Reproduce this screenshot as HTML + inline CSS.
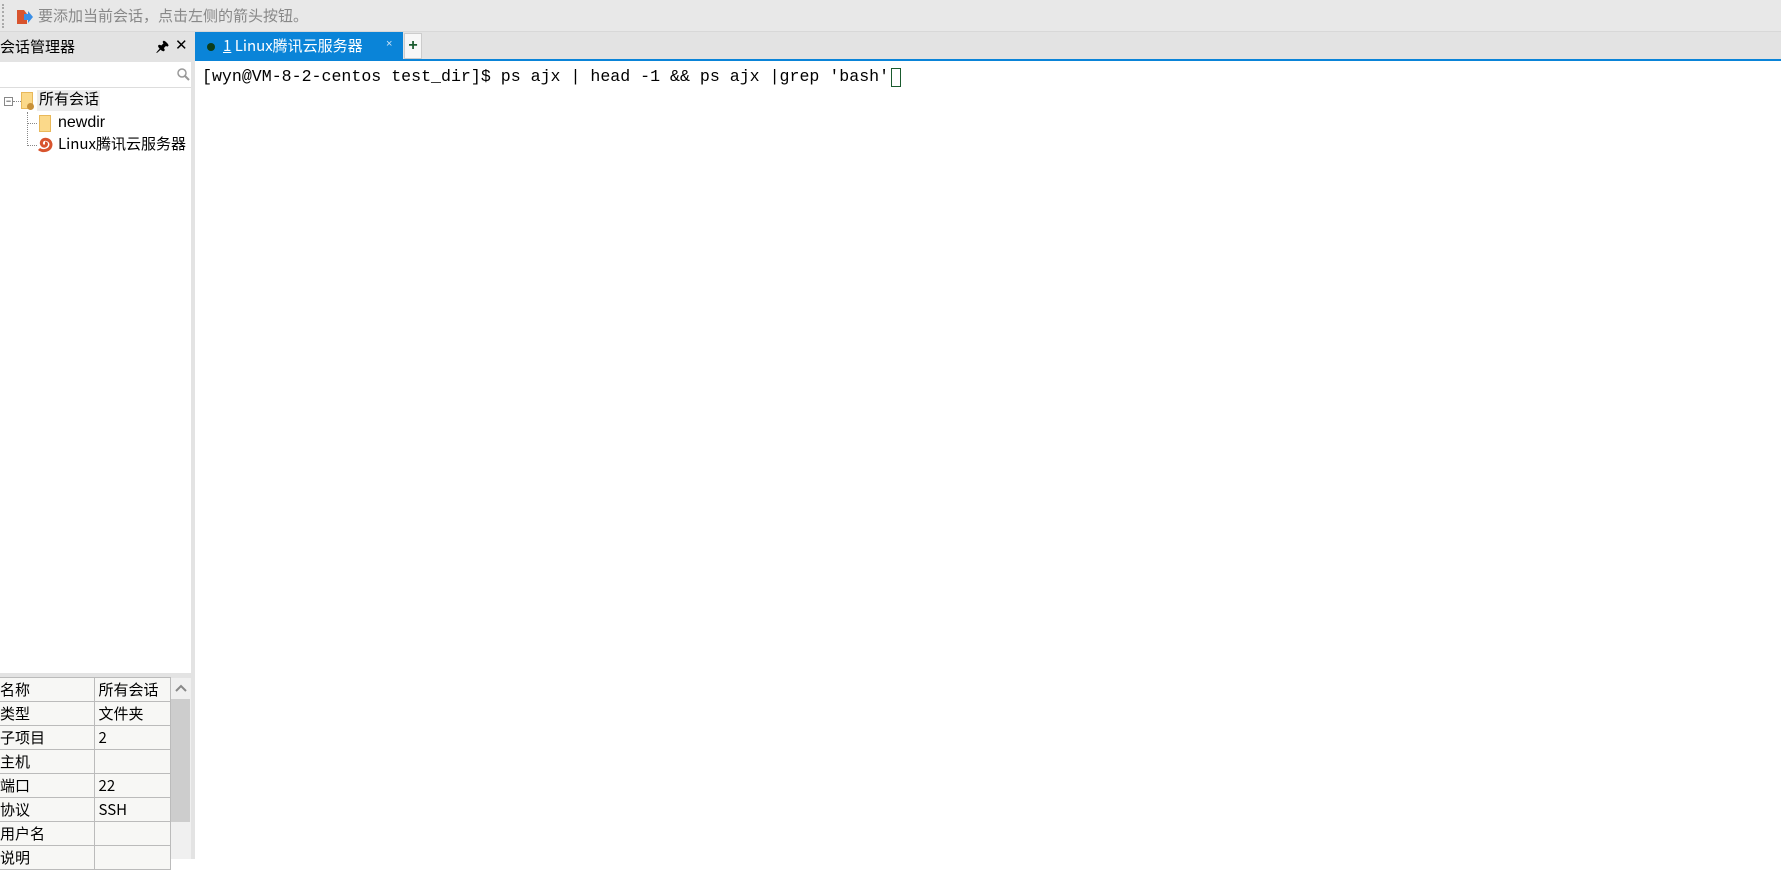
<!DOCTYPE html>
<html><head><meta charset="utf-8"><style>
*{margin:0;padding:0;box-sizing:border-box}
body{width:1781px;height:859px;overflow:hidden;background:#fff;font-family:"Liberation Sans","Noto Sans CJK SC",sans-serif;font-size:14px;color:#000;position:relative}
.a{position:absolute;line-height:1.2}
.cj{font-family:"Noto Sans CJK SC","Liberation Sans",sans-serif}
</style></head><body>
<div class="a" style="left:0;top:0;width:1781px;height:32px;background:#e8e8e8;border-bottom:1px solid #d8d8d8"></div>
<div class="a" style="left:2px;top:4px;width:2px;height:24px;border-left:2px dotted #aaa"></div>
<svg class="a" style="left:16px;top:9px" width="18" height="16"><path d="M1 1h7l3 4v10H1z" fill="#d8542e"/><path d="M8 5h4V2l5 6-5 6v-3H8z" fill="#3a8ee6"/></svg>
<div class="a cj" style="left:38px;top:7px;font-size:15px;color:#888">要添加当前会话，点击左侧的箭头按钮。</div>
<!-- left panel -->
<div class="a" style="left:0;top:32px;width:191px;height:30px;background:#e3e3e3"></div>
<div class="a cj" style="left:0;top:38px;font-size:15px">会话管理器</div>
<div class="a" style="left:156px;top:38px;font-size:14px;font-weight:bold">🖈</div>
<div class="a" style="left:175px;top:37px;font-size:15px">✕</div>
<div class="a" style="left:0;top:62px;width:191px;height:26px;background:#fff;border-bottom:1px solid #ddd"></div>
<svg class="a" style="left:176px;top:67px" width="14" height="14"><circle cx="6" cy="6" r="4" fill="none" stroke="#999" stroke-width="1.5"/><path d="M9 9l4 4" stroke="#999" stroke-width="2"/></svg>
<div class="a" style="left:4px;top:97px;width:9px;height:9px;border:1px solid #888;font-size:9px;line-height:7px;text-align:center">−</div>
<div class="a" style="left:13px;top:101px;width:8px;border-top:1px dotted #888"></div>
<div class="a" style="left:27px;top:112px;height:34px;border-left:1px dotted #888"></div>
<div class="a" style="left:27px;top:123px;width:10px;border-top:1px dotted #888"></div>
<div class="a" style="left:27px;top:145px;width:10px;border-top:1px dotted #888"></div>
<div class="a" style="left:21px;top:92px;width:12px;height:17px;background:#fbd98a;border:1px solid #e8b85a"></div>
<div class="a" style="left:27px;top:103px;width:7px;height:7px;border-radius:50%;background:#c8913a"></div>
<div class="a" style="left:37px;top:90px;width:63px;height:21px;background:#ececec"></div>
<div class="a cj" style="left:39px;top:90px;font-size:15px">所有会话</div>
<div class="a" style="left:39px;top:115px;width:12px;height:17px;background:#fbd98a;border:1px solid #e8b85a"></div>
<div class="a" style="left:58px;top:113px;font-size:16px">newdir</div>
<svg class="a" style="left:37px;top:137px" width="16" height="16"><path d="M2 12C5 15 14 14 14 7 13 2 7 1 5 4 3 7 6 10 8 9 10 8 10 6 8 6" fill="none" stroke="#d8542e" stroke-width="3"/></svg>
<div class="a cj" style="left:58px;top:135px;font-size:15px">Linux腾讯云服务器</div>
<div class="a" style="left:191px;top:32px;width:4px;height:827px;background:#e3e3e3"></div>
<div class="a" style="left:0;top:673px;width:191px;height:5px;background:#e3e3e3"></div>
<!-- table -->
<div class="a cj" style="left:0;top:677px;width:171px;font-size:15px;background:#f7f7f5">
<table style="border-collapse:collapse;width:171px;line-height:20px">
<tr><td style="width:94px;height:24px;border:1px solid #bbb;border-left:0;padding:0">名称</td><td style="border:1px solid #bbb;padding:0 0 0 4px">所有会话</td></tr>
<tr><td style="height:24px;border:1px solid #bbb;border-left:0">类型</td><td style="border:1px solid #bbb;padding-left:4px">文件夹</td></tr>
<tr><td style="height:24px;border:1px solid #bbb;border-left:0">子项目</td><td style="border:1px solid #bbb;padding-left:4px">2</td></tr>
<tr><td style="height:24px;border:1px solid #bbb;border-left:0">主机</td><td style="border:1px solid #bbb;padding-left:4px"></td></tr>
<tr><td style="height:24px;border:1px solid #bbb;border-left:0">端口</td><td style="border:1px solid #bbb;padding-left:4px">22</td></tr>
<tr><td style="height:24px;border:1px solid #bbb;border-left:0">协议</td><td style="border:1px solid #bbb;padding-left:4px">SSH</td></tr>
<tr><td style="height:24px;border:1px solid #bbb;border-left:0">用户名</td><td style="border:1px solid #bbb;padding-left:4px"></td></tr>
<tr><td style="height:24px;border:1px solid #bbb;border-left:0">说明</td><td style="border:1px solid #bbb;padding-left:4px"></td></tr>
</table></div>
<div class="a" style="left:171px;top:678px;width:20px;height:181px;background:#f0f0f0"></div>
<div class="a" style="left:171px;top:699px;width:19px;height:123px;background:#cdcdcd"></div>
<svg class="a" style="left:175px;top:684px" width="12" height="8"><path d="M1 7l5-5 5 5" fill="none" stroke="#888" stroke-width="2"/></svg>
<!-- tabs -->
<div class="a" style="left:195px;top:32px;width:1586px;height:28px;background:#e3e3e3"></div>
<div class="a" style="left:195px;top:32px;width:208px;height:29px;background:#0a84d8"></div>
<div class="a" style="left:207px;top:43px;width:8px;height:8px;border-radius:50%;background:#0c3d1c"></div>
<div class="a cj" style="left:223px;top:37px;font-size:15px;color:#fff"><u>1</u> Linux腾讯云服务器</div>
<div class="a" style="left:386px;top:38px;font-size:11px;color:#cfe4f5">×</div>
<div class="a" style="left:404px;top:33px;width:18px;height:26px;background:#f7f7f7;border:1px solid #ccc;text-align:center;font-weight:bold;color:#1a5b2e;font-size:16px;line-height:24px">+</div>
<div class="a" style="left:195px;top:59px;width:1586px;height:2px;background:#0a84d8"></div>
<!-- terminal -->
<div class="a" style="left:202px;top:67px;font-family:'Liberation Mono',monospace;font-size:16.6px;white-space:pre">[wyn@VM-8-2-centos test_dir]$ ps ajx | head -1 &amp;&amp; ps ajx |grep 'bash'</div>
<div class="a" style="left:891px;top:68px;width:10px;height:19px;border:1px solid #1a5b2e"></div>
</body></html>
